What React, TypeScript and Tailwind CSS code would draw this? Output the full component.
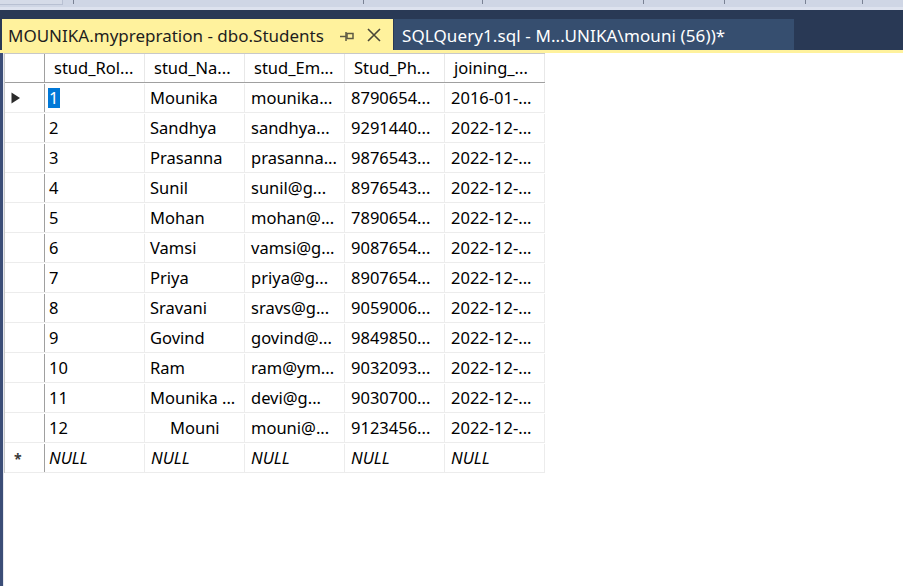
import React from 'react';

const cols = ['stud_Rol...', 'stud_Na...', 'stud_Em...', 'Stud_Ph...', 'joining_...'];

const rows: string[][] = [
  ['1', 'Mounika', 'mounika...', '8790654...', '2016-01-...'],
  ['2', 'Sandhya', 'sandhya...', '9291440...', '2022-12-...'],
  ['3', 'Prasanna', 'prasanna...', '9876543...', '2022-12-...'],
  ['4', 'Sunil', 'sunil@g...', '8976543...', '2022-12-...'],
  ['5', 'Mohan', 'mohan@...', '7890654...', '2022-12-...'],
  ['6', 'Vamsi', 'vamsi@g...', '9087654...', '2022-12-...'],
  ['7', 'Priya', 'priya@g...', '8907654...', '2022-12-...'],
  ['8', 'Sravani', 'sravs@g...', '9059006...', '2022-12-...'],
  ['9', 'Govind', 'govind@...', '9849850...', '2022-12-...'],
  ['10', 'Ram', 'ram@ym...', '9032093...', '2022-12-...'],
  ['11', 'Mounika ...', 'devi@g...', '9030700...', '2022-12-...'],
  ['12', 'Mouni', 'mouni@...', '9123456...', '2022-12-...'],
];

const font = { fontFamily: '"Noto Sans", "Open Sans", sans-serif' };

const App: React.FC = () => {
  return (
    <div className="w-[903px] h-[586px] bg-white flex flex-col overflow-hidden text-black" style={font}>
      {/* toolbar strip */}
      <div className="h-[7px] bg-[#cfd6e5] flex">
        <div className="w-[63px] h-[5px] border-r border-b border-[#b8c0d2] bg-[#d5dbe8]" />
        <div className="w-[1px] h-[4px] bg-[#7a8294] ml-[10px]" />
        <div className="w-[1px] h-[4px] bg-[#7a8294] ml-[289px]" />
        <div className="w-[1px] h-[4px] bg-[#7a8294] ml-[118px]" />
        <div className="w-[1px] h-[4px] bg-[#7a8294] ml-[160px]" />
        <div className="w-[1px] h-[4px] bg-[#7a8294] ml-[80px]" />
        <div className="w-[1px] h-[4px] bg-[#7a8294] ml-[80px]" />
        <div className="w-[1px] h-[4px] bg-[#7a8294] ml-[56px]" />
      </div>
      <div className="h-[3px] bg-[#dde2ee]" />
      {/* tab strip */}
      <div className="bg-[#293955] pt-[9px] flex h-[40px]">
        <div className="ml-[2px] w-[391px] bg-[#fff29d] flex items-center pl-[6px] pt-[3px] text-[17px] text-[#1e1e1e]">
          <span>MOUNIKA.myprepration - dbo.Students</span>
          <svg width="14" height="10" viewBox="0 0 14 10" className="ml-[16px]">
            <path d="M0 5.5h6" stroke="#5d5a44" strokeWidth="1.5" />
            <path d="M6 1v9" stroke="#5d5a44" strokeWidth="1.5" />
            <rect x="7" y="2.5" width="6" height="5" fill="none" stroke="#5d5a44" strokeWidth="1.5" />
          </svg>
          <svg width="14" height="14" viewBox="0 0 14 14" className="ml-[13px] -mt-[3px]">
            <path d="M1 1L13 13M13 1L1 13" stroke="#4a4738" strokeWidth="1.6" />
          </svg>
        </div>
        <div className="ml-[1px] w-[400px] bg-[#364e6f] flex items-center pl-[8px] pt-[3px] text-[17px] tracking-[0.1px] text-white">
          SQLQuery1.sql - M...UNIKA\mouni (56))*
        </div>
      </div>
      <div className="h-[3px] bg-[#fff29d]" />
      {/* body */}
      <div className="flex flex-1">
        <div className="w-[3px] bg-[#3b4d77]" />
        <div className="w-[1px] bg-[#e6e8ee]" />
        <div className="flex flex-col">
          <div className="border-t border-l border-[#c8c8c8] flex flex-col text-[16.5px]">
            {/* header */}
            <div className="flex h-[29px] border-b border-[#a0a0a0]">
              <div className="w-[40px] border-r border-[#a0a0a0]" />
              {cols.map((c) => (
                <div key={c} className="w-[100px] border-r border-[#e8e8e8] pl-[9px] pt-[1px] flex items-center whitespace-nowrap overflow-hidden">
                  {c}
                </div>
              ))}
            </div>
            {rows.map((r, i) => (
              <div key={i} className="flex h-[30px] border-b border-[#ececec] pt-[1px]">
                <div className="w-[40px] border-r border-[#a0a0a0] flex items-center pl-[6px]">
                  {i === 0 && (
                    <svg width="10" height="12" viewBox="0 0 10 12">
                      <path d="M0.5 0.5L9 6L0.5 11.5Z" fill="#2b2b2b" />
                    </svg>
                  )}
                </div>
                {r.map((v, j) => (
                  <div
                    key={j}
                    className={
                      'w-[100px] border-r border-[#ececec] flex items-center whitespace-nowrap overflow-hidden ' +
                      (j === 0 ? 'pl-[3px]' : j === 1 && i === 11 ? 'pl-[26px]' : 'pl-[6px]')
                    }
                  >
                    {i === 0 && j === 0 ? (
                      <span className="bg-[#0078d7] text-white px-[1px] leading-[20px] w-[12px]">{v}</span>
                    ) : (
                      <span className={j === 0 ? 'pl-[1px]' : j === 1 ? '-ml-[1px]' : ''}>{v}</span>
                    )}
                  </div>
                ))}
              </div>
            ))}
            {/* new row */}
            <div className="flex h-[30px] border-b border-[#ececec] pt-[1px]">
              <div className="w-[40px] border-r border-[#a0a0a0] flex items-center pl-[9px] text-[#3a3a3a] text-[14px] font-bold">
                *
              </div>
              {cols.map((c, j) => (
                <div key={c} className={'w-[100px] border-r border-[#ececec] flex items-center italic ' + (j === 0 ? 'pl-[4px]' : 'pl-[6px]')}>
                  NULL
                </div>
              ))}
            </div>
          </div>
        </div>
      </div>
    </div>
  );
};

export default App;
